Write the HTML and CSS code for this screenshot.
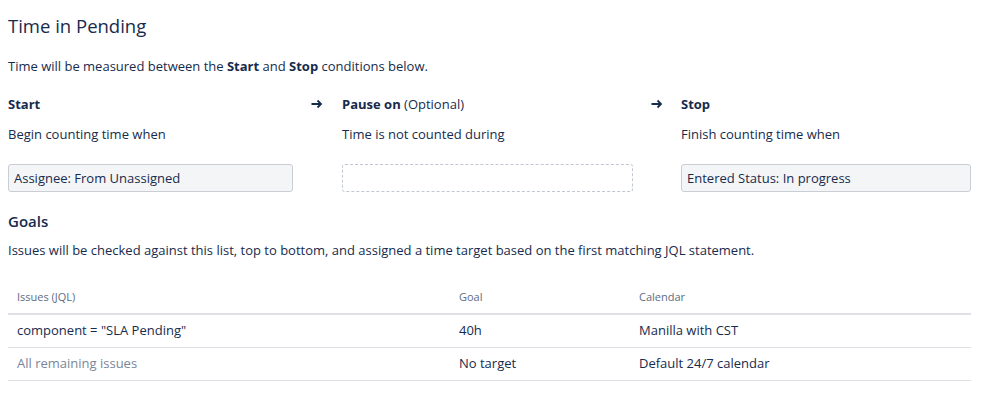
FILE: index.html
```html
<!DOCTYPE html>
<html lang="en">
<head>
<meta charset="utf-8">
<title>Time in Pending</title>
<link rel="stylesheet" href="styles.css">
</head>
<body>
<div class="page">
  <h1 class="title">Time in Pending</h1>
  <p class="intro">Time will be measured between the <b>Start</b> and <b>Stop</b> conditions below.</p>

  <div class="conditions">
    <div class="cond">
      <div class="cond-label"><b>Start</b></div>
      <div class="cond-desc">Begin counting time when</div>
      <div class="field">Assignee: From Unassigned</div>
    </div>
    <div class="arrow">
      <svg width="12" height="10" viewBox="0 0 12 10"><path d="M0.5 5H10M6.5 1.5L10 5L6.5 8.5" fill="none" stroke="#172B4D" stroke-width="1.8"/></svg>
    </div>
    <div class="cond">
      <div class="cond-label"><b>Pause on</b> (Optional)</div>
      <div class="cond-desc">Time is not counted during</div>
      <div class="field field-empty"></div>
    </div>
    <div class="arrow">
      <svg width="12" height="10" viewBox="0 0 12 10"><path d="M0.5 5H10M6.5 1.5L10 5L6.5 8.5" fill="none" stroke="#172B4D" stroke-width="1.8"/></svg>
    </div>
    <div class="cond">
      <div class="cond-label"><b>Stop</b></div>
      <div class="cond-desc">Finish counting time when</div>
      <div class="field">Entered Status: In progress</div>
    </div>
  </div>

  <h2 class="goals-title">Goals</h2>
  <p class="goals-desc">Issues will be checked against this list, top to bottom, and assigned a time target based on the first matching JQL statement.</p>

  <table class="goals">
    <colgroup>
      <col class="c-jql"><col class="c-goal"><col class="c-cal">
    </colgroup>
    <thead>
      <tr><th>Issues (JQL)</th><th>Goal</th><th>Calendar</th></tr>
    </thead>
    <tbody>
      <tr><td>component = "SLA Pending"</td><td>40h</td><td>Manilla with CST</td></tr>
      <tr><td class="muted">All remaining issues</td><td>No target</td><td>Default 24/7 calendar</td></tr>
    </tbody>
  </table>
</div>
</body>
</html>
```

FILE: styles.css
```css
html, body {
  margin: 0;
  padding: 0;
  background: #ffffff;
}
body {
  font-family: "Open Sans", "Noto Sans", "Liberation Sans", sans-serif;
  font-size: 13px;
  line-height: 20px;
  color: #172B4D;
}
.page {
  padding: 14px 28px 0 8px;
}
.title {
  margin: 0;
  font-size: 18.5px;
  line-height: 24px;
  font-weight: 400;
  color: #172B4D;
}
.intro {
  margin: 18px 0 0;
}
.intro b, .cond-label b {
  font-weight: 700;
}
.conditions {
  display: grid;
  grid-template-columns: 285px 49px 291px 48px 290px;
  margin-top: 18px;
}
.cond {
  display: flex;
  flex-direction: column;
}
.cond-desc {
  margin-top: 10px;
}
.field {
  margin-top: 20px;
  height: 20px;
  padding: 3px 5px;
  border: 1px solid #C9CDD4;
  border-radius: 3px;
  background: #F4F5F7;
}
.field-empty {
  background: #ffffff;
  border: 1px dashed #C1C7D0;
}
.arrow {
  padding: 5px 0 0 18px;
}
.arrow svg {
  display: block;
}
.goals-title {
  margin: 19px 0 0;
  font-size: 15px;
  line-height: 20px;
  font-weight: 600;
}
.goals-desc {
  margin: 9px 0 0;
}
.goals {
  margin-top: 25px;
  width: 963px;
  border-collapse: collapse;
  table-layout: fixed;
}
.c-jql { width: 442px; }
.c-goal { width: 180px; }
.c-cal { width: 341px; }
.goals th {
  text-align: left;
  font-weight: 400;
  font-size: 11px;
  line-height: 16px;
  color: #5E6C84;
  padding: 4px 9px 8px;
  border-bottom: 2px solid #DFE1E6;
}
.goals td {
  padding: 5px 9px 7px;
  border-bottom: 1px solid #DFE1E6;
  color: #172B4D;
}
.goals td.muted {
  color: #7A869A;
}
```
